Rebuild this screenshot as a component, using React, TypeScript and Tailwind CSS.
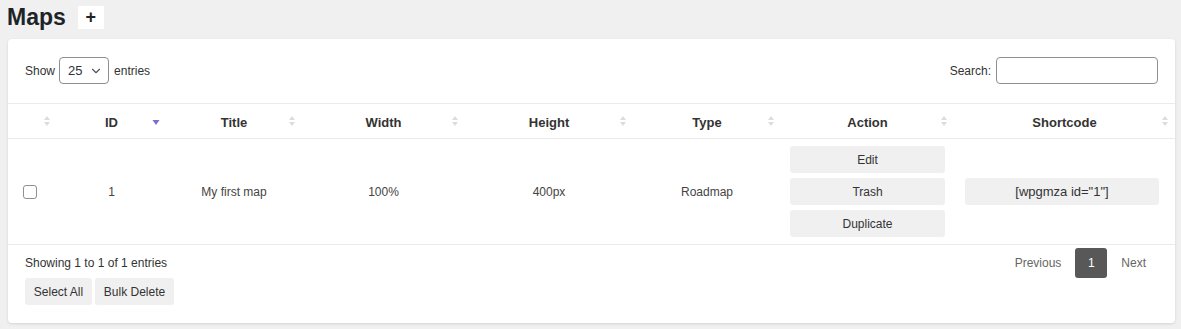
import { ChevronDown } from 'lucide-react';

const font = { fontFamily: '"Liberation Sans", Arial, sans-serif' };

function SortIcon({ active }: { active?: boolean }) {
    if (active) {
        return (
            <svg width="8" height="12" viewBox="0 0 8 12" className="absolute right-[6px] top-1/2 -translate-y-1/2">
                <path d="M0.5 5 L7.5 5 L4 10 Z" fill="#7a6fd0" />
            </svg>
        );
    }
    return (
        <svg width="8" height="12" viewBox="0 0 8 12" className="absolute right-[6px] top-1/2 -translate-y-1/2">
            <path d="M1 5 L7 5 L4 1 Z" fill="#dcdcdc" />
            <path d="M1 7 L7 7 L4 11 Z" fill="#dcdcdc" />
        </svg>
    );
}

const columns = [
    { label: '', w: 'w-[49px]' },
    { label: 'ID', w: 'w-[109px]', active: true },
    { label: 'Title', w: 'w-[136px]' },
    { label: 'Width', w: 'w-[163px]' },
    { label: 'Height', w: 'w-[168px]' },
    { label: 'Type', w: 'w-[148px]' },
    { label: 'Action', w: 'w-[173px]' },
    { label: 'Shortcode', w: 'w-[221px]' },
];

function GrayButton({ children, className = '' }: { children: React.ReactNode; className?: string }) {
    return (
        <button className={`h-[27px] rounded-[3px] bg-[#f0f0f0] text-[12px] text-[#333] ${className}`}>
            {children}
        </button>
    );
}

export default function App() {
    return (
        <div className="min-h-[329px] w-[1181px] bg-[#f0f0f1] pl-[8px] pr-[6px] pt-[5px]" style={font}>
            {/* Header */}
            <div className="flex h-[24px] items-center">
                <h1 className="-ml-[1px] text-[23px] font-semibold leading-none text-[#1d2327]">Maps</h1>
                <button className="ml-[12px] flex h-[23px] w-[26px] items-center justify-center bg-white text-[18px] font-bold leading-none text-[#1d2327]">
                    +
                </button>
            </div>

            {/* Card */}
            <div className="mt-[10px] w-[1167px] rounded-[4px] bg-white pb-[18px] shadow-[0_1px_3px_rgba(0,0,0,0.12)]">
                <div className="flex items-center justify-between px-[17px] pt-[18px]">
                    <div className="flex items-center text-[12px] text-[#333]">
                        <span>Show</span>
                        <div className="ml-[4px] flex h-[27px] w-[50px] items-center justify-between rounded-[4px] border border-[#8c8f94] pl-[8px] pr-[5px]">
                            <span className="text-[13px] text-[#2c3338]">25</span>
                            <ChevronDown size={14} strokeWidth={2} color="#50575e" />
                        </div>
                        <span className="ml-[5px]">entries</span>
                    </div>
                    <div className="flex items-center text-[12px] text-[#333]">
                        <span>Search:</span>
                        <input className="ml-[5px] h-[27px] w-[162px] rounded-[4px] border border-[#8c8f94] outline-none" />
                    </div>
                </div>

                <table className="mt-[19px] w-full table-fixed border-collapse">
                    <thead>
                        <tr className="h-[35px] border-y border-[#ebebeb]">
                            {columns.map((c, i) => (
                                <th key={i} className={`relative ${c.w} pt-[3px] text-center text-[13px] font-bold text-[#333]`}>
                                    {c.label}
                                    <SortIcon active={c.active} />
                                </th>
                            ))}
                        </tr>
                    </thead>
                    <tbody>
                        <tr className="h-[106px] border-b border-[#ebebeb] text-center text-[12px] text-[#444]">
                            <td>
                                <div className="flex justify-center pr-[5px]">
                                    <span className="block h-[14px] w-[14px] rounded-[3px] border border-[#8c8f94]" />
                                </div>
                            </td>
                            <td>1</td>
                            <td>My first map</td>
                            <td>100%</td>
                            <td>400px</td>
                            <td>Roadmap</td>
                            <td>
                                <div className="flex flex-col gap-[5px] pl-[9px] pr-[9px]">
                                    <GrayButton className="w-full">Edit</GrayButton>
                                    <GrayButton className="w-full">Trash</GrayButton>
                                    <GrayButton className="w-full">Duplicate</GrayButton>
                                </div>
                            </td>
                            <td>
                                <div className="pl-[11px] pr-[16px]">
                                    <GrayButton className="w-full text-[13px]">[wpgmza id="1"]</GrayButton>
                                </div>
                            </td>
                        </tr>
                    </tbody>
                </table>

                <div className="flex justify-between pl-[17px] pr-[29px] pt-[3px]">
                    <div>
                        <div className="pt-[8px] text-[12px] leading-[15px] text-[#333]">Showing 1 to 1 of 1 entries</div>
                        <div className="mt-[7px] flex gap-[3px]">
                            <GrayButton className="w-[67px]">Select All</GrayButton>
                            <GrayButton className="w-[79px]">Bulk Delete</GrayButton>
                        </div>
                    </div>
                    <div className="flex h-[30px] items-center text-[12px] text-[#666]">
                        <span className="mr-[14px]">Previous</span>
                        <span className="flex h-[30px] w-[32px] items-center justify-center rounded-[3px] bg-[#585858] text-white">1</span>
                        <span className="ml-[14px]">Next</span>
                    </div>
                </div>
            </div>
        </div>
    );
}
